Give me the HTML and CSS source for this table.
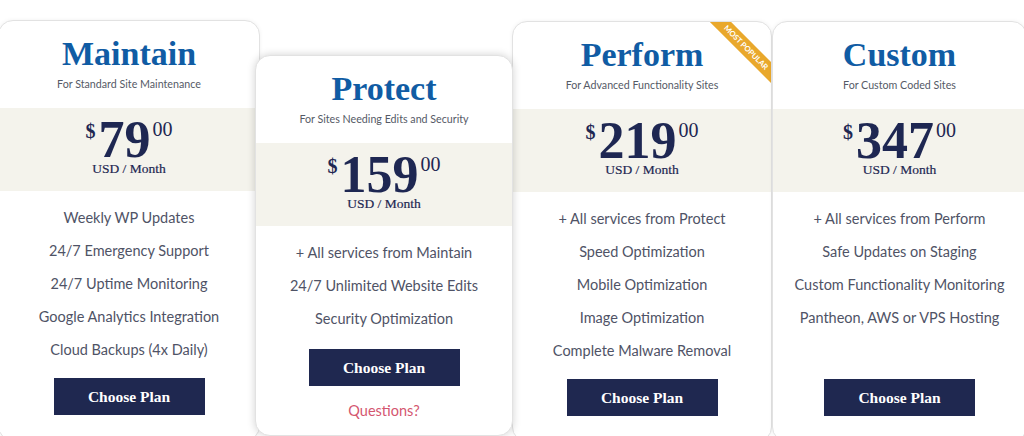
FILE: index.html
```html
<!DOCTYPE html>
<html lang="en">
<head>
<meta charset="utf-8">
<title>Plans</title>
<link rel="stylesheet" href="styles.css">
</head>
<body>
<div class="plans">
  <div class="card card-maintain">
    <h2 class="title">Maintain</h2>
    <p class="sub">For Standard Site Maintenance</p>
    <div class="band">
      <div class="price"><span class="cur">$</span><span class="amt">79</span><span class="cents">00</span></div>
      <div class="per">USD / Month</div>
    </div>
    <ul class="features">
      <li>Weekly WP Updates</li>
      <li>24/7 Emergency Support</li>
      <li>24/7 Uptime Monitoring</li>
      <li>Google Analytics Integration</li>
      <li>Cloud Backups (4x Daily)</li>
    </ul>
    <a class="btn" href="#">Choose Plan</a>
  </div>
  <div class="card card-protect">
    <h2 class="title">Protect</h2>
    <p class="sub">For Sites Needing Edits and Security</p>
    <div class="band">
      <div class="price"><span class="cur">$</span><span class="amt">159</span><span class="cents">00</span></div>
      <div class="per">USD / Month</div>
    </div>
    <ul class="features">
      <li>+ All services from Maintain</li>
      <li>24/7 Unlimited Website Edits</li>
      <li>Security Optimization</li>
    </ul>
    <a class="btn" href="#">Choose Plan</a>
    <a class="questions" href="#">Questions?</a>
  </div>
  <div class="card card-perform">
    <div class="ribbon">MOST POPULAR</div>
    <h2 class="title">Perform</h2>
    <p class="sub">For Advanced Functionality Sites</p>
    <div class="band">
      <div class="price"><span class="cur">$</span><span class="amt">219</span><span class="cents">00</span></div>
      <div class="per">USD / Month</div>
    </div>
    <ul class="features">
      <li>+ All services from Protect</li>
      <li>Speed Optimization</li>
      <li>Mobile Optimization</li>
      <li>Image Optimization</li>
      <li>Complete Malware Removal</li>
    </ul>
    <a class="btn" href="#">Choose Plan</a>
  </div>
  <div class="card card-custom">
    <h2 class="title">Custom</h2>
    <p class="sub">For Custom Coded Sites</p>
    <div class="band">
      <div class="price"><span class="cur">$</span><span class="amt">347</span><span class="cents">00</span></div>
      <div class="per">USD / Month</div>
    </div>
    <ul class="features">
      <li>+ All services from Perform</li>
      <li>Safe Updates on Staging</li>
      <li>Custom Functionality Monitoring</li>
      <li>Pantheon, AWS or VPS Hosting</li>
    </ul>
    <a class="btn" href="#">Choose Plan</a>
  </div>
</div>
</body>
</html>
```

FILE: styles.css
```css
html, body {
  margin: 0;
  padding: 0;
  background: #ffffff;
  overflow: hidden;
}

.plans {
  display: flex;
  align-items: flex-start;
  padding-top: 20px;
  margin-left: -2px;
}

.card {
  position: relative;
  box-sizing: border-box;
  flex: none;
  width: 262px;
  height: 421px;
  display: flex;
  flex-direction: column;
  background: #ffffff;
  border: 1px solid #e2e2e2;
  border-radius: 15px;
  box-shadow: 0 0 4px rgba(0, 0, 0, 0.06);
  overflow: hidden;
  padding: 13px 0 25px;
}

.card-protect {
  width: 258px;
  height: auto;
  margin-left: -5px;
  margin-top: 35px;
  z-index: 2;
  padding-bottom: 14px;
  box-shadow: 0 0 8px rgba(0, 0, 0, 0.18);
}

.card-perform {
  width: 260px;
  margin-left: -1px;
  margin-top: 1px;
}

.card-custom {
  width: 255px;
  margin-top: 1px;
}

.title {
  margin: 0;
  font-family: "Liberation Serif", serif;
  font-weight: bold;
  font-size: 34px;
  line-height: 40px;
  color: #105ca4;
  text-align: center;
}

.sub {
  margin: 2px 0 16px;
  font-family: Lato, sans-serif;
  font-size: 10.7px;
  line-height: 16px;
  color: #555a66;
  text-align: center;
}

.band {
  background: #f4f3ec;
  padding: 10.5px 0 14px;
  text-align: center;
}

.price {
  display: flex;
  justify-content: center;
  align-items: flex-start;
  color: #1e2752;
  font-family: "Liberation Serif", serif;
}

.cur {
  font-weight: bold;
  font-size: 20px;
  line-height: 20px;
  margin-top: 2px;
  margin-right: 3px;
}

.amt {
  font-weight: bold;
  font-size: 52px;
  line-height: 42px;
}

.cents {
  font-size: 20px;
  line-height: 20px;
  margin-left: 2px;
}

.per {
  font-family: "Liberation Serif", serif;
  font-size: 13.5px;
  line-height: 16px;
  color: #1e2752;
  -webkit-text-stroke: 0.2px #1e2752;
}

.features {
  list-style: none;
  margin: 0;
  padding: 10.5px 0 0;
  text-align: center;
  font-family: Lato, sans-serif;
  font-size: 14.5px;
  line-height: 33px;
  color: #4f5366;
}

.btn {
  display: block;
  box-sizing: border-box;
  width: 151px;
  height: 37px;
  margin: auto auto 0;
  background: #1f2850;
  color: #ffffff;
  font-family: "Liberation Serif", serif;
  font-weight: bold;
  font-size: 15.5px;
  line-height: 37px;
  text-align: center;
  text-decoration: none;
}

.card-protect .btn {
  margin-top: 13.5px;
}

.questions {
  display: block;
  margin-top: 15px;
  font-family: Lato, sans-serif;
  font-size: 14.5px;
  line-height: 20px;
  color: #d4566f;
  text-align: center;
  text-decoration: none;
}

.ribbon {
  position: absolute;
  top: 18px;
  right: -24.5px;
  width: 100px;
  height: 15px;
  background: #e9a82c;
  color: #ffffff;
  font-family: Lato, sans-serif;
  font-weight: bold;
  font-size: 7.6px;
  line-height: 15px;
  text-align: center;
  transform: rotate(45deg);
}
```
